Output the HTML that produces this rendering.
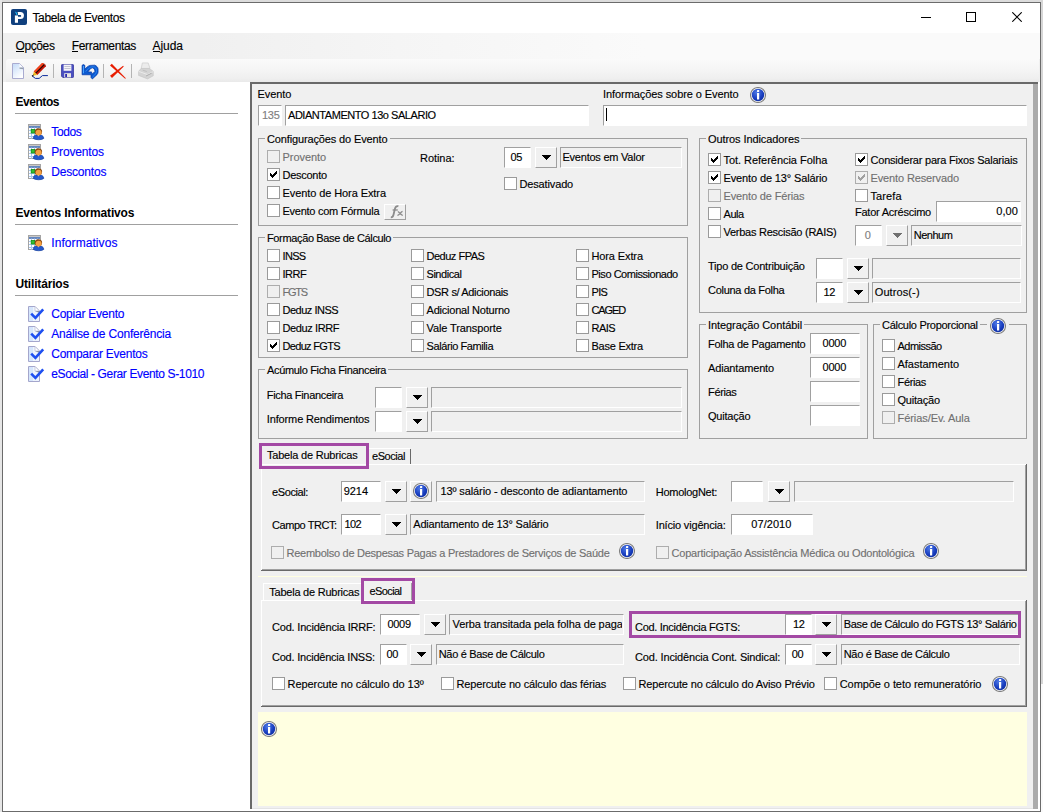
<!DOCTYPE html>
<html><head><meta charset="utf-8"><title>Tabela de Eventos</title>
<style>
html,body{margin:0;padding:0;}
body{width:1043px;height:812px;position:relative;overflow:hidden;background:#fff;font-family:"Liberation Sans",sans-serif;}
div,span.t,svg.a{position:absolute;}
span.t{white-space:nowrap;display:block;-webkit-text-stroke:0.14px currentColor;}
div{overflow:hidden;}
</style></head><body>
<div style="left:0px;top:0px;width:1043px;height:812px;background:#dcdcdc;"></div>
<div style="left:2px;top:2px;width:1039px;height:810px;background:#6b6b6b;"></div>
<div style="left:3px;top:3px;width:1037px;height:808px;background:#fff;"></div>
<div style="left:1041px;top:0px;width:2px;height:684px;background:#d6d6d6;"></div>
<div style="left:1041px;top:684px;width:2px;height:128px;background:#fafafa;"></div>
<div style="left:0px;top:0px;width:2px;height:812px;background:#e6e6e6;"></div>
<svg class="a" style="left:11px;top:9px" width="16" height="16" viewBox="0 0 16 16"><rect x="0" y="0" width="16" height="16" rx="2" fill="#10407e"/><path d="M6.4 2.9h3a3.55 3.55 0 0 1 0 7.1H7v3.800H3.900V6.200h3.100v1.600h2.300a0.900 0.900 0 0 0 0-1.800H6.400z" fill="#fff"/><path d="M3.900 6.200h3.100V5.000L6.400 2.900z" fill="#0e3068"/><path d="M3.800 2.400l2.000 1.000 1.000 3.000-1.600-1.100z" fill="#19b5f0"/></svg>
<span class="t " style="top:9.84px;font-size:12px;line-height:16px;letter-spacing:-0.394px;color:#000;left:32.5px;">Tabela de Eventos</span>
<div style="left:921px;top:17px;width:10px;height:1px;background:#000;"></div>
<div style="left:966px;top:12px;width:10px;height:10px;border:1px solid #000;box-sizing:border-box;"></div>
<svg class="a" style="left:1012px;top:12px" width="10" height="10" viewBox="0 0 10 10"><path d="M0.3 0.3L9.7 9.7M9.7 0.3L0.3 9.7" stroke="#000" stroke-width="1.1" fill="none"/></svg>
<div style="left:3px;top:33px;width:1037px;height:26px;background:linear-gradient(90deg,#f0f0f0 0%,#f0f0f0 19%,#f5f5f5 38%,#fafafa 62%,#fafafa 100%);"></div>
<span class="t " style="top:37.84px;font-size:12px;line-height:16px;letter-spacing:-0.391px;color:#000;left:15.5px;">Opções</span>
<div style="left:15.5px;top:51px;width:8px;height:1px;background:#000;"></div>
<span class="t " style="top:37.84px;font-size:12px;line-height:16px;letter-spacing:-0.342px;color:#000;left:71.75px;">Ferramentas</span>
<div style="left:71.75px;top:51px;width:6px;height:1px;background:#000;"></div>
<span class="t " style="top:37.84px;font-size:12px;line-height:16px;letter-spacing:-0.037px;color:#000;left:152.5px;">Ajuda</span>
<div style="left:152.5px;top:51px;width:7px;height:1px;background:#000;"></div>
<div style="left:3px;top:59px;width:1037px;height:23px;background:#f0f0f0;"></div>
<div style="left:6px;top:59px;width:1033px;height:23px;background:linear-gradient(180deg,#fafafa 0%,#f6f6f6 40%,#efefef 85%,#e9e9e9 100%);border-radius:3px 0 0 0;"></div>
<svg class="a" style="left:12px;top:63px" width="12" height="16" viewBox="0 0 12 16"><defs><linearGradient id="nd" x1="0" y1="0" x2="0.6" y2="1"><stop offset="0" stop-color="#c2daf8"/><stop offset="1" stop-color="#ffffff"/></linearGradient></defs><path d="M0.500 0.500h7l4 4v11h-11z" fill="url(#nd)" stroke="#a9abd0" stroke-width="1"/><path d="M7.500 0.800v3.700h3.700z" fill="#fafbfe"/><path d="M7.500 4.500h3.700v1.700l-3.700-0.500z" fill="#8690a0" opacity="0.85"/></svg>
<svg class="a" style="left:31px;top:62px" width="18" height="18" viewBox="0 0 18 18"><path d="M2.800 9.500L11.100 1.100L12.500 0.900L14.900 3.000L14.900 4.200L6.300 13.000z" fill="#c41608"/><path d="M2.800 9.500L11.100 1.100L12.500 0.900L13.300 1.600L4.300 10.900z" fill="#f4441a"/><path d="M4.500 11.300L13.500 2.300" stroke="#1a0a06" stroke-width="1.100"/><path d="M12.300 1.000l2.500 2.200" stroke="#e8e0e0" stroke-width="0.500"/><path d="M2.800 9.500L6.300 13.000L2.000 13.500z" fill="#f0bc1c"/><path d="M2.000 13.500l1.300-0.150-0.900-1.000z" fill="#3a2a10"/><path d="M1.300 13.300L2.000 14.600" stroke="#08102a" stroke-width="1.300"/><path d="M2.000 14.600L4.400 16.400L8.200 16.400L11.400 13.600L16.900 13.600" fill="none" stroke="#0a2a9c" stroke-width="1.000"/></svg>
<div style="left:53px;top:64px;width:1px;height:14px;background:#b4b4b4;"></div>
<svg class="a" style="left:61px;top:64px" width="13" height="14" viewBox="0 0 13 14"><path d="M0.5 1.2q0-0.7 0.7-0.7h10.6q0.7 0 0.7 0.7v11.6q0 0.7-0.7 0.7H1.8L0.5 12.2z" fill="#4a4fc0" stroke="#3a3aa0" stroke-width="0.8"/><rect x="2.6" y="0.6" width="7.8" height="6.2" fill="#f4f4f8"/><rect x="3.4" y="2.2" width="6.2" height="0.8" fill="#b8b8c8"/><rect x="3.4" y="4" width="6.2" height="0.8" fill="#b8b8c8"/><rect x="3.2" y="9.2" width="6.8" height="4.2" fill="#e8e6e0"/><rect x="4.2" y="10" width="1.8" height="3" fill="#2a2ab0"/></svg>
<svg class="a" style="left:81px;top:64px" width="18" height="16" viewBox="0 0 18 16"><path fill-rule="evenodd" d="M1.100 1.300L2.400 0.500L3.800 1.300L3.800 5.300C5.500 3.200 7.500 1.600 9.200 1.400L13.800 1.150C15.500 1.800 17.050 3.400 17.050 4.940L17.050 8.200C17.000 9.200 16.500 10.000 15.970 10.630L11.360 14.970L10.000 13.500L10.000 10.770L1.100 10.770zM6.800 7.900L10.550 7.900L10.900 10.200L14.050 7.380L13.260 4.940L11.630 3.860L9.740 4.400z" fill="#0c5ad0" stroke="#0036a6" stroke-width="0.700" stroke-linejoin="round"/><path d="M2.500 2.000L2.500 9.300" stroke="#46a4ff" stroke-width="1.000"/><path d="M4.600 7.600C6.500 5.000 8.500 3.000 11.800 2.700C14.500 2.600 15.600 4.800 15.600 6.600C15.600 9.000 13.800 11.000 11.400 13.200" fill="none" stroke="#2a84f0" stroke-width="0.900"/></svg>
<div style="left:103px;top:64px;width:1px;height:14px;background:#b4b4b4;"></div>
<svg class="a" style="left:110px;top:63px" width="17" height="17" viewBox="0 0 17 17"><path d="M1.820 0.680L15.850 15.150L15.150 15.850L-0.020 2.520z" fill="#e81c00"/><path d="M13.120 2.820L13.780 3.580L1.980 15.040L0.020 12.760z" fill="#e81c00"/></svg>
<div style="left:131px;top:64px;width:1px;height:14px;background:#b4b4b4;"></div>
<svg class="a" style="left:138px;top:62px" width="16" height="17.500" viewBox="0 0 17 18" preserveAspectRatio="none"><path d="M3.4 7L4.6 1h6.2l2 5.6z" fill="#ececec" stroke="#cfcfcf" stroke-width="0.8"/><path d="M0.6 9.6L3.4 6.6h8.4l4.4 3v4.6l-6 3.2-9.600-3.600z" fill="#d4d4d4" stroke="#c2c2c2" stroke-width="0.6"/><path d="M0.6 9.6l9.600 3.400 6-3.200" fill="none" stroke="#eeeeee" stroke-width="0.9"/><path d="M8.600 14.400l6-3" stroke="#aaaaaa" stroke-width="1"/><path d="M5 8.400l4.400 1.400" stroke="#b8b8b8" stroke-width="0.8"/></svg>
<span class="t " style="top:93.84px;font-size:12px;line-height:16px;letter-spacing:-0.453px;color:#000;font-weight:bold;-webkit-text-stroke:0;left:15.5px;">Eventos</span>
<div style="left:15px;top:113px;width:223px;height:1px;background:#a0a0a0;"></div>
<svg class="a" style="left:28px;top:124px" width="17" height="17" viewBox="0 0 17 17"><rect x="0.5" y="0.5" width="12" height="14" fill="#fff" stroke="#a4a4a4"/><rect x="1" y="1" width="11" height="1.300" fill="#c8c8c8"/><rect x="1" y="2.300" width="11" height="1.400" fill="#2c5aa8"/><path d="M1 6.500h11M1 9.500h11M1 12.500h11M3.500 3.600v11M6.500 3.600v11M9.500 3.600v11" stroke="#a8c8f0" stroke-width="1"/><rect x="3.200" y="5.400" width="3.600" height="3.600" fill="#30c030" stroke="#109010" stroke-width="0.8"/><path d="M5.200 14.400c0-2.600 1.800-3.600 5-3.600s5.600 1 5.600 3.600c-1.600 1.800-8.600 1.800-10.600 0z" fill="#2458c8" stroke="#123a98" stroke-width="0.6"/><path d="M9.400 10.800l1 1.800 1-1.800z" fill="#e8f0ff"/><ellipse cx="10.400" cy="7.800" rx="3.700" ry="3.500" fill="#8a4a10"/><ellipse cx="10.600" cy="8.600" rx="3" ry="2.900" fill="#f5a040"/></svg>
<span class="t " style="top:123.84px;font-size:12px;line-height:16px;letter-spacing:-0.353px;color:#0000ff;left:51.25px;">Todos</span>
<svg class="a" style="left:28px;top:144px" width="17" height="17" viewBox="0 0 17 17"><rect x="0.5" y="0.5" width="12" height="14" fill="#fff" stroke="#a4a4a4"/><rect x="1" y="1" width="11" height="1.300" fill="#c8c8c8"/><rect x="1" y="2.300" width="11" height="1.400" fill="#2c5aa8"/><path d="M1 6.500h11M1 9.500h11M1 12.500h11M3.500 3.600v11M6.500 3.600v11M9.500 3.600v11" stroke="#a8c8f0" stroke-width="1"/><rect x="3.200" y="5.400" width="3.600" height="3.600" fill="#30c030" stroke="#109010" stroke-width="0.8"/><path d="M5.200 14.400c0-2.600 1.800-3.600 5-3.600s5.600 1 5.600 3.600c-1.600 1.800-8.600 1.800-10.600 0z" fill="#2458c8" stroke="#123a98" stroke-width="0.6"/><path d="M9.400 10.800l1 1.800 1-1.800z" fill="#e8f0ff"/><ellipse cx="10.400" cy="7.800" rx="3.700" ry="3.500" fill="#8a4a10"/><ellipse cx="10.600" cy="8.600" rx="3" ry="2.900" fill="#f5a040"/></svg>
<span class="t " style="top:143.84px;font-size:12px;line-height:16px;letter-spacing:-0.168px;color:#0000ff;left:51.25px;">Proventos</span>
<svg class="a" style="left:28px;top:164px" width="17" height="17" viewBox="0 0 17 17"><rect x="0.5" y="0.5" width="12" height="14" fill="#fff" stroke="#a4a4a4"/><rect x="1" y="1" width="11" height="1.300" fill="#c8c8c8"/><rect x="1" y="2.300" width="11" height="1.400" fill="#2c5aa8"/><path d="M1 6.500h11M1 9.500h11M1 12.500h11M3.500 3.600v11M6.500 3.600v11M9.500 3.600v11" stroke="#a8c8f0" stroke-width="1"/><rect x="3.200" y="5.400" width="3.600" height="3.600" fill="#30c030" stroke="#109010" stroke-width="0.8"/><path d="M5.200 14.400c0-2.600 1.800-3.600 5-3.600s5.600 1 5.600 3.600c-1.600 1.800-8.600 1.800-10.600 0z" fill="#2458c8" stroke="#123a98" stroke-width="0.6"/><path d="M9.400 10.800l1 1.800 1-1.800z" fill="#e8f0ff"/><ellipse cx="10.400" cy="7.800" rx="3.700" ry="3.500" fill="#8a4a10"/><ellipse cx="10.600" cy="8.600" rx="3" ry="2.900" fill="#f5a040"/></svg>
<span class="t " style="top:163.84px;font-size:12px;line-height:16px;letter-spacing:-0.188px;color:#0000ff;left:51.25px;">Descontos</span>
<span class="t " style="top:204.84px;font-size:12px;line-height:16px;letter-spacing:-0.163px;color:#000;font-weight:bold;-webkit-text-stroke:0;left:15.5px;">Eventos Informativos</span>
<div style="left:15px;top:224px;width:223px;height:1px;background:#a0a0a0;"></div>
<svg class="a" style="left:28px;top:235px" width="17" height="17" viewBox="0 0 17 17"><rect x="0.5" y="0.5" width="12" height="14" fill="#fff" stroke="#a4a4a4"/><rect x="1" y="1" width="11" height="1.300" fill="#c8c8c8"/><rect x="1" y="2.300" width="11" height="1.400" fill="#2c5aa8"/><path d="M1 6.500h11M1 9.500h11M1 12.500h11M3.500 3.600v11M6.500 3.600v11M9.500 3.600v11" stroke="#a8c8f0" stroke-width="1"/><rect x="3.200" y="5.400" width="3.600" height="3.600" fill="#30c030" stroke="#109010" stroke-width="0.8"/><path d="M5.200 14.400c0-2.600 1.800-3.600 5-3.600s5.600 1 5.600 3.600c-1.600 1.800-8.600 1.800-10.600 0z" fill="#2458c8" stroke="#123a98" stroke-width="0.6"/><path d="M9.400 10.800l1 1.800 1-1.800z" fill="#e8f0ff"/><ellipse cx="10.400" cy="7.800" rx="3.700" ry="3.500" fill="#8a4a10"/><ellipse cx="10.600" cy="8.600" rx="3" ry="2.900" fill="#f5a040"/></svg>
<span class="t " style="top:234.84px;font-size:12px;line-height:16px;letter-spacing:0.076px;color:#0000ff;left:51.25px;">Informativos</span>
<span class="t " style="top:275.84px;font-size:12px;line-height:16px;letter-spacing:-0.166px;color:#000;font-weight:bold;-webkit-text-stroke:0;left:15.5px;">Utilitários</span>
<div style="left:15px;top:295px;width:223px;height:1px;background:#a0a0a0;"></div>
<svg class="a" style="left:28px;top:306px" width="17" height="17" viewBox="0 0 17 17"><path d="M0.500 0.500h6.500l4.500 4.500v10.500h-11z" fill="#eef4fd" stroke="#a4a6cc"/><path d="M1 1h4v14h-4z" fill="#cfe2fb" opacity="0.8"/><path d="M7.000 0.500v4.500h4.500z" fill="#fff" stroke="#b8bad4" stroke-width="0.7"/><path d="M7.100 5h4.200v2z" fill="#7c8694" opacity="0.85"/><path d="M3.200 7.600l4.200 4.200 7.800-8.400" fill="none" stroke="#1e4ff0" stroke-width="2.600"/></svg>
<span class="t " style="top:305.84px;font-size:12px;line-height:16px;letter-spacing:-0.233px;color:#0000ff;left:51.25px;">Copiar Evento</span>
<svg class="a" style="left:28px;top:326px" width="17" height="17" viewBox="0 0 17 17"><path d="M0.500 0.500h6.500l4.500 4.500v10.500h-11z" fill="#eef4fd" stroke="#a4a6cc"/><path d="M1 1h4v14h-4z" fill="#cfe2fb" opacity="0.8"/><path d="M7.000 0.500v4.500h4.500z" fill="#fff" stroke="#b8bad4" stroke-width="0.7"/><path d="M7.100 5h4.200v2z" fill="#7c8694" opacity="0.85"/><path d="M3.200 7.600l4.200 4.200 7.800-8.400" fill="none" stroke="#1e4ff0" stroke-width="2.600"/></svg>
<span class="t " style="top:325.84px;font-size:12px;line-height:16px;letter-spacing:-0.196px;color:#0000ff;left:51.25px;">Análise de Conferência</span>
<svg class="a" style="left:28px;top:346px" width="17" height="17" viewBox="0 0 17 17"><path d="M0.500 0.500h6.500l4.500 4.500v10.500h-11z" fill="#eef4fd" stroke="#a4a6cc"/><path d="M1 1h4v14h-4z" fill="#cfe2fb" opacity="0.8"/><path d="M7.000 0.500v4.500h4.500z" fill="#fff" stroke="#b8bad4" stroke-width="0.7"/><path d="M7.100 5h4.200v2z" fill="#7c8694" opacity="0.85"/><path d="M3.200 7.600l4.200 4.200 7.800-8.400" fill="none" stroke="#1e4ff0" stroke-width="2.600"/></svg>
<span class="t " style="top:345.84px;font-size:12px;line-height:16px;letter-spacing:-0.236px;color:#0000ff;left:51.25px;">Comparar Eventos</span>
<svg class="a" style="left:28px;top:366px" width="17" height="17" viewBox="0 0 17 17"><path d="M0.500 0.500h6.500l4.500 4.500v10.500h-11z" fill="#eef4fd" stroke="#a4a6cc"/><path d="M1 1h4v14h-4z" fill="#cfe2fb" opacity="0.8"/><path d="M7.000 0.500v4.500h4.500z" fill="#fff" stroke="#b8bad4" stroke-width="0.7"/><path d="M7.100 5h4.200v2z" fill="#7c8694" opacity="0.85"/><path d="M3.200 7.600l4.200 4.200 7.800-8.400" fill="none" stroke="#1e4ff0" stroke-width="2.600"/></svg>
<span class="t " style="top:365.84px;font-size:12px;line-height:16px;letter-spacing:-0.366px;color:#0000ff;left:51.25px;">eSocial - Gerar Evento S-1010</span>
<div style="left:250px;top:82px;width:789px;height:727px;background:#696969;"></div>
<div style="left:252px;top:84px;width:788px;height:727px;background:#f0f0f0;"></div>
<div style="left:1033px;top:84px;width:5px;height:725px;background:#ababab;"></div>
<div style="left:1038px;top:82px;width:2px;height:729px;background:#fff;"></div>
<div style="left:1039px;top:82px;width:1px;height:2px;background:#fff;"></div>
<div style="left:250px;top:809px;width:790px;height:2px;background:#fff;"></div>
<div style="left:252px;top:808px;width:781px;height:1px;background:#e4e4e4;"></div>
<span class="t " style="top:86.69px;font-size:11px;line-height:15px;letter-spacing:-0.097px;color:#000;left:257.5px;">Evento</span>
<div style="left:258px;top:105px;width:24px;height:21px;background:#fff;border:1px solid;border-color:#a0a0a0 #fff #fff #a0a0a0;box-sizing:border-box;"></div>
<span class="t " style="top:107.69px;font-size:11px;line-height:15px;letter-spacing:-0.292px;color:#808080;left:262px;">135</span>
<div style="left:285px;top:105px;width:304px;height:21px;background:#fff;border:1px solid;border-color:#a0a0a0 #fff #fff #a0a0a0;box-sizing:border-box;"></div>
<span class="t " style="top:107.69px;font-size:11px;line-height:15px;letter-spacing:-0.455px;color:#000;left:288px;">ADIANTAMENTO 13o SALARIO</span>
<span class="t " style="top:86.69px;font-size:11px;line-height:15px;letter-spacing:-0.075px;color:#000;left:603px;">Informações sobre o Evento</span>
<svg class="a" style="left:750px;top:87px" width="16" height="16" viewBox="0 0 16 16"><defs><radialGradient id="ig1" cx="0.4" cy="0.3" r="0.8"><stop offset="0" stop-color="#4f7be6"/><stop offset="0.6" stop-color="#1a3fc0"/><stop offset="1" stop-color="#0a2a9a"/></radialGradient></defs><circle cx="8" cy="8" r="7.5" fill="#fafafa" stroke="#808080" stroke-width="1.1"/><circle cx="8" cy="8" r="6.2" fill="url(#ig1)"/><rect x="7" y="3" width="2.2" height="2" rx="0.6" fill="#fff"/><rect x="7" y="6" width="2.2" height="6.5" fill="#fff"/></svg>
<div style="left:603px;top:105px;width:424px;height:21px;background:#fff;border:1px solid;border-color:#a0a0a0 #fff #fff #a0a0a0;box-sizing:border-box;"></div>
<div style="left:606px;top:108px;width:1px;height:13px;background:#000;"></div>
<div style="left:258px;top:138px;width:430px;height:88px;border:1px solid #a0a0a0;box-sizing:border-box;"></div>
<div style="left:265px;top:136px;width:124.5px;height:5px;background:#f0f0f0;"></div>
<span class="t " style="top:131.69px;font-size:11px;line-height:15px;letter-spacing:-0.136px;color:#000;left:267px;">Configurações do Evento</span>
<div style="left:267px;top:150px;width:13px;height:13px;background:#f0f0f0;border:1px solid #adadad;box-sizing:border-box;"></div>
<span class="t " style="top:149.69px;font-size:11px;line-height:15px;letter-spacing:-0.058px;color:#707070;left:282.5px;">Provento</span>
<div style="left:267px;top:168px;width:13px;height:13px;background:#fff;border:1px solid #9a9a9a;box-sizing:border-box;"><svg class="a" style="left:1px;top:1px" width="9" height="9" viewBox="0 0 9 9" shape-rendering="crispEdges"><path d="M1 3h1v3h-1zM2 4h1v3h-1zM3 5h1v3h-1zM4 4h1v3h-1zM5 3h1v3h-1zM6 2h1v3h-1zM7 1h1v3h-1z" fill="#000"/></svg></div>
<span class="t " style="top:167.69px;font-size:11px;line-height:15px;letter-spacing:-0.263px;color:#000;left:282.5px;">Desconto</span>
<div style="left:267px;top:186px;width:13px;height:13px;background:#fff;border:1px solid #9a9a9a;box-sizing:border-box;"></div>
<span class="t " style="top:185.69px;font-size:11px;line-height:15px;letter-spacing:-0.087px;color:#000;left:282.5px;">Evento de Hora Extra</span>
<div style="left:267px;top:204px;width:13px;height:13px;background:#fff;border:1px solid #9a9a9a;box-sizing:border-box;"></div>
<span class="t " style="top:203.69px;font-size:11px;line-height:15px;letter-spacing:-0.263px;color:#000;left:282.5px;">Evento com Fórmula</span>
<div style="left:384px;top:204px;width:22px;height:16px;background:#f0f0f0;border:1px solid;border-color:#fff #a0a0a0 #a0a0a0 #fff;box-sizing:border-box;"></div>
<svg class="a" style="left:389px;top:205px" width="17" height="14" viewBox="0 0 17 14"><path d="M1.800 12.300c1.600 0.100 2.300-0.900 2.700-2.600l1.500-6.200c0.500-1.900 1.500-2.700 3.400-2.300" fill="none" stroke="#8c8c8c" stroke-width="1.800"/><path d="M3.600 5.000h5.200" stroke="#8c8c8c" stroke-width="1.300"/><path d="M8.800 6.600c1.400 0 3.400 3.800 5.000 3.800M13.600 6.400c-1.600 0.200-3.400 4.000-5.200 4.000" stroke="#8c8c8c" stroke-width="1.300" fill="none"/></svg>
<span class="t " style="top:150.69px;font-size:11px;line-height:15px;letter-spacing:-0.054px;color:#000;left:420px;">Rotina:</span>
<div style="left:504px;top:147px;width:27px;height:21px;background:#fff;border:1px solid;border-color:#a0a0a0 #fff #fff #a0a0a0;box-sizing:border-box;"></div>
<span class="t " style="top:149.69px;font-size:11px;line-height:15px;letter-spacing:-0.275px;color:#000;left:510.5px;">05</span>
<div style="left:535px;top:147px;width:22px;height:21px;background:#f0f0f0;border:1px solid;border-color:#fff #a0a0a0 #a0a0a0 #fff;box-sizing:border-box;"></div>
<svg class="a" style="left:541.5px;top:155px" width="9" height="5" viewBox="0 0 9 5" shape-rendering="crispEdges"><path d="M0 0h9v1h-9zM1 1h7v1h-7zM2 2h5v1h-5zM3 3h3v1h-3zM4 4h1v1h-1z" fill="#000"/></svg>
<div style="left:560px;top:147px;width:122px;height:21px;background:#f0f0f0;border:1px solid;border-color:#a0a0a0 #fff #fff #a0a0a0;box-sizing:border-box;"></div>
<span class="t " style="top:149.69px;font-size:11px;line-height:15px;letter-spacing:-0.235px;color:#000;left:562.5px;">Eventos em Valor</span>
<div style="left:504px;top:177px;width:13px;height:13px;background:#fff;border:1px solid #9a9a9a;box-sizing:border-box;"></div>
<span class="t " style="top:176.69px;font-size:11px;line-height:15px;letter-spacing:-0.146px;color:#000;left:519.5px;">Desativado</span>
<div style="left:258px;top:237px;width:430px;height:121px;border:1px solid #a0a0a0;box-sizing:border-box;"></div>
<div style="left:265px;top:235px;width:128.2px;height:5px;background:#f0f0f0;"></div>
<span class="t " style="top:230.69px;font-size:11px;line-height:15px;letter-spacing:-0.356px;color:#000;left:267px;">Formação Base de Cálculo</span>
<div style="left:267px;top:249px;width:13px;height:13px;background:#fff;border:1px solid #9a9a9a;box-sizing:border-box;"></div>
<span class="t " style="top:248.69px;font-size:11px;line-height:15px;letter-spacing:-0.672px;color:#000;left:282.5px;">INSS</span>
<div style="left:411px;top:249px;width:13px;height:13px;background:#fff;border:1px solid #9a9a9a;box-sizing:border-box;"></div>
<span class="t " style="top:248.69px;font-size:11px;line-height:15px;letter-spacing:-0.491px;color:#000;left:426.5px;">Deduz FPAS</span>
<div style="left:576px;top:249px;width:13px;height:13px;background:#fff;border:1px solid #9a9a9a;box-sizing:border-box;"></div>
<span class="t " style="top:248.69px;font-size:11px;line-height:15px;letter-spacing:-0.119px;color:#000;left:591.5px;">Hora Extra</span>
<div style="left:267px;top:267px;width:13px;height:13px;background:#fff;border:1px solid #9a9a9a;box-sizing:border-box;"></div>
<span class="t " style="top:266.69px;font-size:11px;line-height:15px;letter-spacing:-0.489px;color:#000;left:282.5px;">IRRF</span>
<div style="left:411px;top:267px;width:13px;height:13px;background:#fff;border:1px solid #9a9a9a;box-sizing:border-box;"></div>
<span class="t " style="top:266.69px;font-size:11px;line-height:15px;letter-spacing:-0.454px;color:#000;left:426.5px;">Sindical</span>
<div style="left:576px;top:267px;width:13px;height:13px;background:#fff;border:1px solid #9a9a9a;box-sizing:border-box;"></div>
<span class="t " style="top:266.69px;font-size:11px;line-height:15px;letter-spacing:-0.464px;color:#000;left:591.5px;">Piso Comissionado</span>
<div style="left:267px;top:285px;width:13px;height:13px;background:#f0f0f0;border:1px solid #adadad;box-sizing:border-box;"></div>
<span class="t " style="top:284.69px;font-size:11px;line-height:15px;letter-spacing:-1.236px;color:#707070;left:282.5px;">FGTS</span>
<div style="left:411px;top:285px;width:13px;height:13px;background:#fff;border:1px solid #9a9a9a;box-sizing:border-box;"></div>
<span class="t " style="top:284.69px;font-size:11px;line-height:15px;letter-spacing:-0.350px;color:#000;left:426.5px;">DSR s/ Adicionais</span>
<div style="left:576px;top:285px;width:13px;height:13px;background:#fff;border:1px solid #9a9a9a;box-sizing:border-box;"></div>
<span class="t " style="top:284.69px;font-size:11px;line-height:15px;letter-spacing:-0.683px;color:#000;left:591.5px;">PIS</span>
<div style="left:267px;top:303px;width:13px;height:13px;background:#fff;border:1px solid #9a9a9a;box-sizing:border-box;"></div>
<span class="t " style="top:302.69px;font-size:11px;line-height:15px;letter-spacing:-0.496px;color:#000;left:282.5px;">Deduz INSS</span>
<div style="left:411px;top:303px;width:13px;height:13px;background:#fff;border:1px solid #9a9a9a;box-sizing:border-box;"></div>
<span class="t " style="top:302.69px;font-size:11px;line-height:15px;letter-spacing:-0.210px;color:#000;left:426.5px;">Adicional Noturno</span>
<div style="left:576px;top:303px;width:13px;height:13px;background:#fff;border:1px solid #9a9a9a;box-sizing:border-box;"></div>
<span class="t " style="top:302.69px;font-size:11px;line-height:15px;letter-spacing:-1.085px;color:#000;left:591.5px;">CAGED</span>
<div style="left:267px;top:321px;width:13px;height:13px;background:#fff;border:1px solid #9a9a9a;box-sizing:border-box;"></div>
<span class="t " style="top:320.69px;font-size:11px;line-height:15px;letter-spacing:-0.393px;color:#000;left:282.5px;">Deduz IRRF</span>
<div style="left:411px;top:321px;width:13px;height:13px;background:#fff;border:1px solid #9a9a9a;box-sizing:border-box;"></div>
<span class="t " style="top:320.69px;font-size:11px;line-height:15px;letter-spacing:-0.106px;color:#000;left:426.5px;">Vale Transporte</span>
<div style="left:576px;top:321px;width:13px;height:13px;background:#fff;border:1px solid #9a9a9a;box-sizing:border-box;"></div>
<span class="t " style="top:320.69px;font-size:11px;line-height:15px;letter-spacing:-0.497px;color:#000;left:591.5px;">RAIS</span>
<div style="left:267px;top:339px;width:13px;height:13px;background:#fff;border:1px solid #9a9a9a;box-sizing:border-box;"><svg class="a" style="left:1px;top:1px" width="9" height="9" viewBox="0 0 9 9" shape-rendering="crispEdges"><path d="M1 3h1v3h-1zM2 4h1v3h-1zM3 5h1v3h-1zM4 4h1v3h-1zM5 3h1v3h-1zM6 2h1v3h-1zM7 1h1v3h-1z" fill="#000"/></svg></div>
<span class="t " style="top:338.69px;font-size:11px;line-height:15px;letter-spacing:-0.682px;color:#000;left:282.5px;">Deduz FGTS</span>
<div style="left:411px;top:339px;width:13px;height:13px;background:#fff;border:1px solid #9a9a9a;box-sizing:border-box;"></div>
<span class="t " style="top:338.69px;font-size:11px;line-height:15px;letter-spacing:-0.410px;color:#000;left:426.5px;">Salário Familia</span>
<div style="left:576px;top:339px;width:13px;height:13px;background:#fff;border:1px solid #9a9a9a;box-sizing:border-box;"></div>
<span class="t " style="top:338.69px;font-size:11px;line-height:15px;letter-spacing:-0.244px;color:#000;left:591.5px;">Base Extra</span>
<div style="left:258px;top:369px;width:430px;height:70px;border:1px solid #a0a0a0;box-sizing:border-box;"></div>
<div style="left:265px;top:367px;width:123.2px;height:5px;background:#f0f0f0;"></div>
<span class="t " style="top:362.69px;font-size:11px;line-height:15px;letter-spacing:-0.334px;color:#000;left:267px;">Acúmulo Ficha Financeira</span>
<span class="t " style="top:387.69px;font-size:11px;line-height:15px;letter-spacing:-0.315px;color:#000;left:266.75px;">Ficha Financeira</span>
<span class="t " style="top:411.69px;font-size:11px;line-height:15px;letter-spacing:-0.130px;color:#000;left:266.75px;">Informe Rendimentos</span>
<div style="left:375px;top:387px;width:27px;height:21px;background:#fff;border:1px solid;border-color:#a0a0a0 #fff #fff #a0a0a0;box-sizing:border-box;"></div>
<div style="left:406px;top:387px;width:22px;height:21px;background:#f0f0f0;border:1px solid;border-color:#fff #a0a0a0 #a0a0a0 #fff;box-sizing:border-box;"></div>
<svg class="a" style="left:412.5px;top:395px" width="9" height="5" viewBox="0 0 9 5" shape-rendering="crispEdges"><path d="M0 0h9v1h-9zM1 1h7v1h-7zM2 2h5v1h-5zM3 3h3v1h-3zM4 4h1v1h-1z" fill="#000"/></svg>
<div style="left:431px;top:387px;width:251px;height:21px;background:#f0f0f0;border:1px solid;border-color:#a0a0a0 #fff #fff #a0a0a0;box-sizing:border-box;"></div>
<div style="left:375px;top:411px;width:27px;height:21px;background:#fff;border:1px solid;border-color:#a0a0a0 #fff #fff #a0a0a0;box-sizing:border-box;"></div>
<div style="left:406px;top:411px;width:22px;height:21px;background:#f0f0f0;border:1px solid;border-color:#fff #a0a0a0 #a0a0a0 #fff;box-sizing:border-box;"></div>
<svg class="a" style="left:412.5px;top:419px" width="9" height="5" viewBox="0 0 9 5" shape-rendering="crispEdges"><path d="M0 0h9v1h-9zM1 1h7v1h-7zM2 2h5v1h-5zM3 3h3v1h-3zM4 4h1v1h-1z" fill="#000"/></svg>
<div style="left:431px;top:411px;width:251px;height:21px;background:#f0f0f0;border:1px solid;border-color:#a0a0a0 #fff #fff #a0a0a0;box-sizing:border-box;"></div>
<div style="left:699px;top:138px;width:328px;height:175px;border:1px solid #a0a0a0;box-sizing:border-box;"></div>
<div style="left:706px;top:136px;width:95.4px;height:5px;background:#f0f0f0;"></div>
<span class="t " style="top:131.69px;font-size:11px;line-height:15px;letter-spacing:-0.089px;color:#000;left:708px;">Outros Indicadores</span>
<div style="left:708px;top:153px;width:13px;height:13px;background:#fff;border:1px solid #9a9a9a;box-sizing:border-box;"><svg class="a" style="left:1px;top:1px" width="9" height="9" viewBox="0 0 9 9" shape-rendering="crispEdges"><path d="M1 3h1v3h-1zM2 4h1v3h-1zM3 5h1v3h-1zM4 4h1v3h-1zM5 3h1v3h-1zM6 2h1v3h-1zM7 1h1v3h-1z" fill="#000"/></svg></div>
<span class="t " style="top:152.69px;font-size:11px;line-height:15px;letter-spacing:-0.035px;color:#000;left:723.5px;">Tot. Referência Folha</span>
<div style="left:708px;top:171px;width:13px;height:13px;background:#fff;border:1px solid #9a9a9a;box-sizing:border-box;"><svg class="a" style="left:1px;top:1px" width="9" height="9" viewBox="0 0 9 9" shape-rendering="crispEdges"><path d="M1 3h1v3h-1zM2 4h1v3h-1zM3 5h1v3h-1zM4 4h1v3h-1zM5 3h1v3h-1zM6 2h1v3h-1zM7 1h1v3h-1z" fill="#000"/></svg></div>
<span class="t " style="top:170.69px;font-size:11px;line-height:15px;letter-spacing:-0.130px;color:#000;left:723.5px;">Evento de 13° Salário</span>
<div style="left:708px;top:189px;width:13px;height:13px;background:#f0f0f0;border:1px solid #adadad;box-sizing:border-box;"></div>
<span class="t " style="top:188.69px;font-size:11px;line-height:15px;letter-spacing:-0.145px;color:#707070;left:723.5px;">Evento de Férias</span>
<div style="left:708px;top:207px;width:13px;height:13px;background:#fff;border:1px solid #9a9a9a;box-sizing:border-box;"></div>
<span class="t " style="top:206.69px;font-size:11px;line-height:15px;letter-spacing:-0.433px;color:#000;left:723.5px;">Aula</span>
<div style="left:708px;top:225px;width:13px;height:13px;background:#fff;border:1px solid #9a9a9a;box-sizing:border-box;"></div>
<span class="t " style="top:224.69px;font-size:11px;line-height:15px;letter-spacing:-0.256px;color:#000;left:723.5px;">Verbas Rescisão (RAIS)</span>
<div style="left:855px;top:153px;width:13px;height:13px;background:#fff;border:1px solid #9a9a9a;box-sizing:border-box;"><svg class="a" style="left:1px;top:1px" width="9" height="9" viewBox="0 0 9 9" shape-rendering="crispEdges"><path d="M1 3h1v3h-1zM2 4h1v3h-1zM3 5h1v3h-1zM4 4h1v3h-1zM5 3h1v3h-1zM6 2h1v3h-1zM7 1h1v3h-1z" fill="#000"/></svg></div>
<span class="t " style="top:152.69px;font-size:11px;line-height:15px;letter-spacing:-0.210px;color:#000;left:870.5px;">Considerar para Fixos Salariais</span>
<div style="left:855px;top:171px;width:13px;height:13px;background:#f0f0f0;border:1px solid #adadad;box-sizing:border-box;"><svg class="a" style="left:1px;top:1px" width="9" height="9" viewBox="0 0 9 9" shape-rendering="crispEdges"><path d="M1 3h1v3h-1zM2 4h1v3h-1zM3 5h1v3h-1zM4 4h1v3h-1zM5 3h1v3h-1zM6 2h1v3h-1zM7 1h1v3h-1z" fill="#a0a0a0"/></svg></div>
<span class="t " style="top:170.69px;font-size:11px;line-height:15px;letter-spacing:-0.129px;color:#707070;left:870.5px;">Evento Reservado</span>
<div style="left:855px;top:189px;width:13px;height:13px;background:#fff;border:1px solid #9a9a9a;box-sizing:border-box;"></div>
<span class="t " style="top:188.69px;font-size:11px;line-height:15px;letter-spacing:0.101px;color:#000;left:870.5px;">Tarefa</span>
<span class="t " style="top:204.69px;font-size:11px;line-height:15px;letter-spacing:-0.232px;color:#000;left:855px;">Fator Acréscimo</span>
<div style="left:936px;top:201px;width:85px;height:21px;background:#fff;border:1px solid;border-color:#a0a0a0 #fff #fff #a0a0a0;box-sizing:border-box;"></div>
<span class="t " style="top:203.69px;font-size:11px;line-height:15px;letter-spacing:0.066px;color:#000;left:996.23px;">0,00</span>
<div style="left:855px;top:225px;width:27px;height:21px;background:#fff;border:1px solid;border-color:#a0a0a0 #fff #fff #a0a0a0;box-sizing:border-box;"></div>
<span class="t " style="top:227.69px;font-size:11px;line-height:15px;letter-spacing:-0.325px;color:#808080;left:864.75px;">0</span>
<div style="left:886px;top:225px;width:22px;height:21px;background:#f0f0f0;border:1px solid;border-color:#fff #a0a0a0 #a0a0a0 #fff;box-sizing:border-box;"></div>
<svg class="a" style="left:892.5px;top:233px" width="9" height="5" viewBox="0 0 9 5" shape-rendering="crispEdges"><path d="M0 0h9v1h-9zM1 1h7v1h-7zM2 2h5v1h-5zM3 3h3v1h-3zM4 4h1v1h-1z" fill="#707070"/></svg>
<div style="left:911px;top:225px;width:111px;height:21px;background:#f0f0f0;border:1px solid;border-color:#a0a0a0 #fff #fff #a0a0a0;box-sizing:border-box;"></div>
<span class="t " style="top:227.69px;font-size:11px;line-height:15px;letter-spacing:-0.482px;color:#000;left:913.75px;">Nenhum</span>
<span class="t " style="top:258.69px;font-size:11px;line-height:15px;letter-spacing:-0.218px;color:#000;left:708px;">Tipo de Contribuição</span>
<span class="t " style="top:282.69px;font-size:11px;line-height:15px;letter-spacing:-0.285px;color:#000;left:708px;">Coluna da Folha</span>
<div style="left:816px;top:258px;width:27px;height:21px;background:#fff;border:1px solid;border-color:#a0a0a0 #fff #fff #a0a0a0;box-sizing:border-box;"></div>
<div style="left:847px;top:258px;width:22px;height:21px;background:#f0f0f0;border:1px solid;border-color:#fff #a0a0a0 #a0a0a0 #fff;box-sizing:border-box;"></div>
<svg class="a" style="left:853.5px;top:266px" width="9" height="5" viewBox="0 0 9 5" shape-rendering="crispEdges"><path d="M0 0h9v1h-9zM1 1h7v1h-7zM2 2h5v1h-5zM3 3h3v1h-3zM4 4h1v1h-1z" fill="#000"/></svg>
<div style="left:872px;top:258px;width:149px;height:21px;background:#f0f0f0;border:1px solid;border-color:#a0a0a0 #fff #fff #a0a0a0;box-sizing:border-box;"></div>
<div style="left:816px;top:282px;width:27px;height:21px;background:#fff;border:1px solid;border-color:#a0a0a0 #fff #fff #a0a0a0;box-sizing:border-box;"></div>
<div style="left:847px;top:282px;width:22px;height:21px;background:#f0f0f0;border:1px solid;border-color:#fff #a0a0a0 #a0a0a0 #fff;box-sizing:border-box;"></div>
<svg class="a" style="left:853.5px;top:290px" width="9" height="5" viewBox="0 0 9 5" shape-rendering="crispEdges"><path d="M0 0h9v1h-9zM1 1h7v1h-7zM2 2h5v1h-5zM3 3h3v1h-3zM4 4h1v1h-1z" fill="#000"/></svg>
<div style="left:872px;top:282px;width:149px;height:21px;background:#f0f0f0;border:1px solid;border-color:#a0a0a0 #fff #fff #a0a0a0;box-sizing:border-box;"></div>
<span class="t " style="top:284.69px;font-size:11px;line-height:15px;letter-spacing:-0.275px;color:#000;left:823.5px;">12</span>
<span class="t " style="top:284.69px;font-size:11px;line-height:15px;letter-spacing:0.100px;color:#000;left:874.75px;">Outros(-)</span>
<div style="left:699px;top:324px;width:169px;height:115px;border:1px solid #a0a0a0;box-sizing:border-box;"></div>
<div style="left:706px;top:322px;width:98.1px;height:5px;background:#f0f0f0;"></div>
<span class="t " style="top:317.69px;font-size:11px;line-height:15px;letter-spacing:-0.072px;color:#000;left:708px;">Integração Contábil</span>
<span class="t " style="top:336.69px;font-size:11px;line-height:15px;letter-spacing:-0.262px;color:#000;left:708px;">Folha de Pagamento</span>
<div style="left:810px;top:333px;width:50px;height:21px;background:#fff;border:1px solid;border-color:#a0a0a0 #fff #fff #a0a0a0;box-sizing:border-box;"></div>
<span class="t " style="top:335.69px;font-size:11px;line-height:15px;letter-spacing:-0.188px;color:#000;left:822.5px;">0000</span>
<span class="t " style="top:360.69px;font-size:11px;line-height:15px;letter-spacing:-0.161px;color:#000;left:708px;">Adiantamento</span>
<div style="left:810px;top:357px;width:50px;height:21px;background:#fff;border:1px solid;border-color:#a0a0a0 #fff #fff #a0a0a0;box-sizing:border-box;"></div>
<span class="t " style="top:359.69px;font-size:11px;line-height:15px;letter-spacing:-0.188px;color:#000;left:822.5px;">0000</span>
<span class="t " style="top:384.69px;font-size:11px;line-height:15px;letter-spacing:-0.344px;color:#000;left:708px;">Férias</span>
<div style="left:810px;top:381px;width:50px;height:21px;background:#fff;border:1px solid;border-color:#a0a0a0 #fff #fff #a0a0a0;box-sizing:border-box;"></div>
<span class="t " style="top:408.69px;font-size:11px;line-height:15px;letter-spacing:-0.208px;color:#000;left:708px;">Quitação</span>
<div style="left:810px;top:405px;width:50px;height:21px;background:#fff;border:1px solid;border-color:#a0a0a0 #fff #fff #a0a0a0;box-sizing:border-box;"></div>
<div style="left:873px;top:324px;width:154px;height:115px;border:1px solid #a0a0a0;box-sizing:border-box;"></div>
<div style="left:880px;top:322px;width:99.75px;height:5px;background:#f0f0f0;"></div>
<span class="t " style="top:317.69px;font-size:11px;line-height:15px;letter-spacing:-0.289px;color:#000;left:882px;">Cálculo Proporcional</span>
<div style="left:987px;top:322px;width:22px;height:5px;background:#f0f0f0;"></div>
<svg class="a" style="left:990px;top:318px" width="16" height="16" viewBox="0 0 16 16"><defs><radialGradient id="ig2" cx="0.4" cy="0.3" r="0.8"><stop offset="0" stop-color="#4f7be6"/><stop offset="0.6" stop-color="#1a3fc0"/><stop offset="1" stop-color="#0a2a9a"/></radialGradient></defs><circle cx="8" cy="8" r="7.5" fill="#fafafa" stroke="#808080" stroke-width="1.1"/><circle cx="8" cy="8" r="6.2" fill="url(#ig2)"/><rect x="7" y="3" width="2.2" height="2" rx="0.6" fill="#fff"/><rect x="7" y="6" width="2.2" height="6.5" fill="#fff"/></svg>
<div style="left:882px;top:339px;width:13px;height:13px;background:#fff;border:1px solid #9a9a9a;box-sizing:border-box;"></div>
<span class="t " style="top:338.69px;font-size:11px;line-height:15px;letter-spacing:-0.527px;color:#000;left:897.5px;">Admissão</span>
<div style="left:882px;top:357px;width:13px;height:13px;background:#fff;border:1px solid #9a9a9a;box-sizing:border-box;"></div>
<span class="t " style="top:356.69px;font-size:11px;line-height:15px;letter-spacing:-0.019px;color:#000;left:897.5px;">Afastamento</span>
<div style="left:882px;top:375px;width:13px;height:13px;background:#fff;border:1px solid #9a9a9a;box-sizing:border-box;"></div>
<span class="t " style="top:374.69px;font-size:11px;line-height:15px;letter-spacing:-0.344px;color:#000;left:897.5px;">Férias</span>
<div style="left:882px;top:393px;width:13px;height:13px;background:#fff;border:1px solid #9a9a9a;box-sizing:border-box;"></div>
<span class="t " style="top:392.69px;font-size:11px;line-height:15px;letter-spacing:-0.208px;color:#000;left:897.5px;">Quitação</span>
<div style="left:882px;top:411px;width:13px;height:13px;background:#f0f0f0;border:1px solid #adadad;box-sizing:border-box;"></div>
<span class="t " style="top:410.69px;font-size:11px;line-height:15px;letter-spacing:-0.060px;color:#707070;left:897.5px;">Férias/Ev. Aula</span>
<div style="left:261px;top:464px;width:765px;height:1px;background:#fff;"></div>
<div style="left:261px;top:464px;width:1px;height:106px;background:#fff;"></div>
<div style="left:1025px;top:465px;width:1px;height:106px;background:#a0a0a0;"></div>
<div style="left:1026px;top:464px;width:1px;height:107px;background:#696969;"></div>
<div style="left:262px;top:569px;width:764px;height:1px;background:#a0a0a0;"></div>
<div style="left:261px;top:570px;width:766px;height:1px;background:#696969;"></div>
<span class="t " style="top:447.69px;font-size:11px;line-height:15px;letter-spacing:-0.207px;color:#000;left:267px;">Tabela de Rubricas</span>
<span class="t " style="top:448.69px;font-size:11px;line-height:15px;letter-spacing:-0.442px;color:#000;left:372px;">eSocial</span>
<div style="left:369px;top:448px;width:41px;height:1px;background:#fff;"></div>
<div style="left:410px;top:449px;width:1px;height:15px;background:#696969;"></div>
<div style="left:259px;top:443px;width:110px;height:26px;border:3px solid #a349a4;box-sizing:border-box;"></div>
<span class="t " style="top:484.69px;font-size:11px;line-height:15px;letter-spacing:-0.395px;color:#000;left:272px;">eSocial:</span>
<div style="left:341px;top:481px;width:40px;height:21px;background:#fff;border:1px solid;border-color:#a0a0a0 #fff #fff #a0a0a0;box-sizing:border-box;"></div>
<span class="t " style="top:483.69px;font-size:11px;line-height:15px;letter-spacing:-0.075px;color:#000;left:343.75px;">9214</span>
<div style="left:385px;top:481px;width:22px;height:21px;background:#f0f0f0;border:1px solid;border-color:#fff #a0a0a0 #a0a0a0 #fff;box-sizing:border-box;"></div>
<svg class="a" style="left:391.5px;top:489px" width="9" height="5" viewBox="0 0 9 5" shape-rendering="crispEdges"><path d="M0 0h9v1h-9zM1 1h7v1h-7zM2 2h5v1h-5zM3 3h3v1h-3zM4 4h1v1h-1z" fill="#000"/></svg>
<div style="left:410px;top:481px;width:22px;height:21px;background:#f0f0f0;border:1px solid;border-color:#fff #a0a0a0 #a0a0a0 #fff;box-sizing:border-box;"></div>
<svg class="a" style="left:413px;top:483px" width="16" height="16" viewBox="0 0 16 16"><defs><radialGradient id="ig3" cx="0.4" cy="0.3" r="0.8"><stop offset="0" stop-color="#4f7be6"/><stop offset="0.6" stop-color="#1a3fc0"/><stop offset="1" stop-color="#0a2a9a"/></radialGradient></defs><circle cx="8" cy="8" r="7.5" fill="#fafafa" stroke="#808080" stroke-width="1.1"/><circle cx="8" cy="8" r="6.2" fill="url(#ig3)"/><rect x="7" y="3" width="2.2" height="2" rx="0.6" fill="#fff"/><rect x="7" y="6" width="2.2" height="6.5" fill="#fff"/></svg>
<div style="left:436px;top:481px;width:209px;height:21px;background:#f0f0f0;border:1px solid;border-color:#a0a0a0 #fff #fff #a0a0a0;box-sizing:border-box;"></div>
<span class="t " style="top:483.69px;font-size:11px;line-height:15px;letter-spacing:-0.113px;color:#000;left:440.5px;">13º salário - desconto de adiantamento</span>
<span class="t " style="top:484.69px;font-size:11px;line-height:15px;letter-spacing:-0.270px;color:#000;left:655.75px;">HomologNet:</span>
<div style="left:731px;top:481px;width:32px;height:21px;background:#fff;border:1px solid;border-color:#a0a0a0 #fff #fff #a0a0a0;box-sizing:border-box;"></div>
<div style="left:768px;top:481px;width:22px;height:21px;background:#f0f0f0;border:1px solid;border-color:#fff #a0a0a0 #a0a0a0 #fff;box-sizing:border-box;"></div>
<svg class="a" style="left:774.5px;top:489px" width="9" height="5" viewBox="0 0 9 5" shape-rendering="crispEdges"><path d="M0 0h9v1h-9zM1 1h7v1h-7zM2 2h5v1h-5zM3 3h3v1h-3zM4 4h1v1h-1z" fill="#000"/></svg>
<div style="left:794px;top:481px;width:220px;height:21px;background:#f0f0f0;border:1px solid;border-color:#a0a0a0 #fff #fff #a0a0a0;box-sizing:border-box;"></div>
<span class="t " style="top:517.69px;font-size:11px;line-height:15px;letter-spacing:-0.430px;color:#000;left:272px;">Campo TRCT:</span>
<div style="left:341px;top:514px;width:40px;height:21px;background:#fff;border:1px solid;border-color:#a0a0a0 #fff #fff #a0a0a0;box-sizing:border-box;"></div>
<span class="t " style="top:516.69px;font-size:11px;line-height:15px;letter-spacing:-0.625px;color:#000;left:344.5px;">102</span>
<div style="left:385px;top:514px;width:22px;height:21px;background:#f0f0f0;border:1px solid;border-color:#fff #a0a0a0 #a0a0a0 #fff;box-sizing:border-box;"></div>
<svg class="a" style="left:391.5px;top:522px" width="9" height="5" viewBox="0 0 9 5" shape-rendering="crispEdges"><path d="M0 0h9v1h-9zM1 1h7v1h-7zM2 2h5v1h-5zM3 3h3v1h-3zM4 4h1v1h-1z" fill="#000"/></svg>
<div style="left:410px;top:514px;width:235px;height:21px;background:#f0f0f0;border:1px solid;border-color:#a0a0a0 #fff #fff #a0a0a0;box-sizing:border-box;"></div>
<span class="t " style="top:516.69px;font-size:11px;line-height:15px;letter-spacing:-0.181px;color:#000;left:413.25px;">Adiantamento de 13° Salário</span>
<span class="t " style="top:517.69px;font-size:11px;line-height:15px;letter-spacing:-0.176px;color:#000;left:655.75px;">Início vigência:</span>
<div style="left:731px;top:514px;width:82px;height:21px;background:#fff;border:1px solid;border-color:#a0a0a0 #fff #fff #a0a0a0;box-sizing:border-box;"></div>
<span class="t " style="top:516.69px;font-size:11px;line-height:15px;letter-spacing:0.055px;color:#000;left:751.3px;">07/2010</span>
<div style="left:271px;top:546px;width:13px;height:13px;background:#f0f0f0;border:1px solid #adadad;box-sizing:border-box;"></div>
<span class="t " style="top:545.69px;font-size:11px;line-height:15px;letter-spacing:-0.264px;color:#707070;left:286.5px;">Reembolso de Despesas Pagas a Prestadores de Serviços de Saúde</span>
<svg class="a" style="left:619px;top:543px" width="16" height="16" viewBox="0 0 16 16"><defs><radialGradient id="ig4" cx="0.4" cy="0.3" r="0.8"><stop offset="0" stop-color="#4f7be6"/><stop offset="0.6" stop-color="#1a3fc0"/><stop offset="1" stop-color="#0a2a9a"/></radialGradient></defs><circle cx="8" cy="8" r="7.5" fill="#fafafa" stroke="#808080" stroke-width="1.1"/><circle cx="8" cy="8" r="6.2" fill="url(#ig4)"/><rect x="7" y="3" width="2.2" height="2" rx="0.6" fill="#fff"/><rect x="7" y="6" width="2.2" height="6.5" fill="#fff"/></svg>
<div style="left:656px;top:546px;width:13px;height:13px;background:#f0f0f0;border:1px solid #adadad;box-sizing:border-box;"></div>
<span class="t " style="top:545.69px;font-size:11px;line-height:15px;letter-spacing:-0.210px;color:#707070;left:671.5px;">Coparticipação Assistência Médica ou Odontológica</span>
<svg class="a" style="left:923px;top:543px" width="16" height="16" viewBox="0 0 16 16"><defs><radialGradient id="ig5" cx="0.4" cy="0.3" r="0.8"><stop offset="0" stop-color="#4f7be6"/><stop offset="0.6" stop-color="#1a3fc0"/><stop offset="1" stop-color="#0a2a9a"/></radialGradient></defs><circle cx="8" cy="8" r="7.5" fill="#fafafa" stroke="#808080" stroke-width="1.1"/><circle cx="8" cy="8" r="6.2" fill="url(#ig5)"/><rect x="7" y="3" width="2.2" height="2" rx="0.6" fill="#fff"/><rect x="7" y="6" width="2.2" height="6.5" fill="#fff"/></svg>
<div style="left:258px;top:576px;width:769px;height:1px;background:#ffffe1;"></div>
<div style="left:261px;top:600px;width:765px;height:1px;background:#fff;"></div>
<div style="left:261px;top:600px;width:1px;height:106px;background:#fff;"></div>
<div style="left:1025px;top:601px;width:1px;height:106px;background:#a0a0a0;"></div>
<div style="left:1026px;top:600px;width:1px;height:107px;background:#696969;"></div>
<div style="left:262px;top:705px;width:764px;height:1px;background:#a0a0a0;"></div>
<div style="left:261px;top:706px;width:766px;height:1px;background:#696969;"></div>
<div style="left:263px;top:583px;width:98px;height:1px;background:#fff;"></div>
<div style="left:263px;top:583px;width:1px;height:17px;background:#fff;"></div>
<span class="t " style="top:584.69px;font-size:11px;line-height:15px;letter-spacing:-0.234px;color:#000;left:269.25px;">Tabela de Rubricas</span>
<span class="t " style="top:583.69px;font-size:11px;line-height:15px;letter-spacing:-0.585px;color:#000;left:369.5px;">eSocial</span>
<div style="left:361px;top:578px;width:54px;height:26px;border:3px solid #a349a4;box-sizing:border-box;"></div>
<div style="left:411px;top:583px;width:1px;height:17px;background:#a0a0a0;"></div>
<span class="t " style="top:620.19px;font-size:11px;line-height:15px;letter-spacing:-0.198px;color:#000;left:272px;">Cod. Incidência IRRF:</span>
<div style="left:380px;top:614px;width:40px;height:21px;background:#fff;border:1px solid;border-color:#a0a0a0 #fff #fff #a0a0a0;box-sizing:border-box;"></div>
<span class="t " style="top:616.69px;font-size:11px;line-height:15px;letter-spacing:-0.325px;color:#000;left:387.5px;">0009</span>
<div style="left:424px;top:614px;width:22px;height:21px;background:#f0f0f0;border:1px solid;border-color:#fff #a0a0a0 #a0a0a0 #fff;box-sizing:border-box;"></div>
<svg class="a" style="left:430.5px;top:622px" width="9" height="5" viewBox="0 0 9 5" shape-rendering="crispEdges"><path d="M0 0h9v1h-9zM1 1h7v1h-7zM2 2h5v1h-5zM3 3h3v1h-3zM4 4h1v1h-1z" fill="#000"/></svg>
<div style="left:449px;top:614px;width:175px;height:21px;background:#f0f0f0;border:1px solid;border-color:#a0a0a0 #fff #fff #a0a0a0;box-sizing:border-box;"></div>
<div style="left:450px;top:615px;width:172px;height:19px;"></div>
<div style="left:450px;top:615px;width:172px;height:19px;"><span class="t" style="left:2.5px;top:2.19px;font-size:11px;line-height:15px;letter-spacing:-0.1px;">Verba transitada pela folha de pagamento</span></div>
<span class="t " style="top:620.19px;font-size:11px;line-height:15px;letter-spacing:-0.302px;color:#000;left:635px;">Cod. Incidência FGTS:</span>
<div style="left:785px;top:614px;width:27px;height:21px;background:#fff;border:1px solid;border-color:#a0a0a0 #fff #fff #a0a0a0;box-sizing:border-box;"></div>
<span class="t " style="top:616.69px;font-size:11px;line-height:15px;letter-spacing:-0.275px;color:#000;left:793px;">12</span>
<div style="left:815px;top:614px;width:22px;height:21px;background:#f0f0f0;border:1px solid;border-color:#fff #a0a0a0 #a0a0a0 #fff;box-sizing:border-box;"></div>
<svg class="a" style="left:821.5px;top:622px" width="9" height="5" viewBox="0 0 9 5" shape-rendering="crispEdges"><path d="M0 0h9v1h-9zM1 1h7v1h-7zM2 2h5v1h-5zM3 3h3v1h-3zM4 4h1v1h-1z" fill="#000"/></svg>
<div style="left:841px;top:614px;width:178px;height:21px;background:#f0f0f0;border:1px solid;border-color:#a0a0a0 #fff #fff #a0a0a0;box-sizing:border-box;"></div>
<span class="t " style="top:616.69px;font-size:11px;line-height:15px;letter-spacing:-0.340px;color:#000;left:843.75px;">Base de Cálculo do FGTS 13° Salário</span>
<div style="left:629px;top:611px;width:392px;height:27px;border:3px solid #a349a4;box-sizing:border-box;"></div>
<span class="t " style="top:650.44px;font-size:11px;line-height:15px;letter-spacing:-0.223px;color:#000;left:272px;">Cod. Incidência INSS:</span>
<div style="left:380px;top:644px;width:27px;height:21px;background:#fff;border:1px solid;border-color:#a0a0a0 #fff #fff #a0a0a0;box-sizing:border-box;"></div>
<span class="t " style="top:646.69px;font-size:11px;line-height:15px;letter-spacing:-0.275px;color:#000;left:386.5px;">00</span>
<div style="left:410px;top:644px;width:22px;height:21px;background:#f0f0f0;border:1px solid;border-color:#fff #a0a0a0 #a0a0a0 #fff;box-sizing:border-box;"></div>
<svg class="a" style="left:416.5px;top:652px" width="9" height="5" viewBox="0 0 9 5" shape-rendering="crispEdges"><path d="M0 0h9v1h-9zM1 1h7v1h-7zM2 2h5v1h-5zM3 3h3v1h-3zM4 4h1v1h-1z" fill="#000"/></svg>
<div style="left:436px;top:644px;width:188px;height:21px;background:#f0f0f0;border:1px solid;border-color:#a0a0a0 #fff #fff #a0a0a0;box-sizing:border-box;"></div>
<span class="t " style="top:646.69px;font-size:11px;line-height:15px;letter-spacing:-0.324px;color:#000;left:438.75px;">Não é Base de Cálculo</span>
<span class="t " style="top:650.44px;font-size:11px;line-height:15px;letter-spacing:-0.152px;color:#000;left:635px;">Cod. Incidência Cont. Sindical:</span>
<div style="left:785px;top:644px;width:27px;height:21px;background:#fff;border:1px solid;border-color:#a0a0a0 #fff #fff #a0a0a0;box-sizing:border-box;"></div>
<span class="t " style="top:646.69px;font-size:11px;line-height:15px;letter-spacing:-0.275px;color:#000;left:791.75px;">00</span>
<div style="left:815px;top:644px;width:22px;height:21px;background:#f0f0f0;border:1px solid;border-color:#fff #a0a0a0 #a0a0a0 #fff;box-sizing:border-box;"></div>
<svg class="a" style="left:821.5px;top:652px" width="9" height="5" viewBox="0 0 9 5" shape-rendering="crispEdges"><path d="M0 0h9v1h-9zM1 1h7v1h-7zM2 2h5v1h-5zM3 3h3v1h-3zM4 4h1v1h-1z" fill="#000"/></svg>
<div style="left:841px;top:644px;width:179px;height:21px;background:#f0f0f0;border:1px solid;border-color:#a0a0a0 #fff #fff #a0a0a0;box-sizing:border-box;"></div>
<span class="t " style="top:646.69px;font-size:11px;line-height:15px;letter-spacing:-0.324px;color:#000;left:843.75px;">Não é Base de Cálculo</span>
<div style="left:272px;top:677px;width:13px;height:13px;background:#fff;border:1px solid #9a9a9a;box-sizing:border-box;"></div>
<span class="t " style="top:676.69px;font-size:11px;line-height:15px;letter-spacing:-0.067px;color:#000;left:287.5px;">Repercute no cálculo do 13º</span>
<div style="left:441px;top:677px;width:13px;height:13px;background:#fff;border:1px solid #9a9a9a;box-sizing:border-box;"></div>
<span class="t " style="top:676.69px;font-size:11px;line-height:15px;letter-spacing:-0.143px;color:#000;left:456.5px;">Repercute no cálculo das férias</span>
<div style="left:623px;top:677px;width:13px;height:13px;background:#fff;border:1px solid #9a9a9a;box-sizing:border-box;"></div>
<span class="t " style="top:676.69px;font-size:11px;line-height:15px;letter-spacing:-0.163px;color:#000;left:638.5px;">Repercute no cálculo do Aviso Prévio</span>
<div style="left:824.25px;top:677px;width:13px;height:13px;background:#fff;border:1px solid #9a9a9a;box-sizing:border-box;"></div>
<span class="t " style="top:676.69px;font-size:11px;line-height:15px;letter-spacing:-0.075px;color:#000;left:839.75px;">Compõe o teto remuneratório</span>
<svg class="a" style="left:992px;top:675.5px" width="16" height="16" viewBox="0 0 16 16"><defs><radialGradient id="ig6" cx="0.4" cy="0.3" r="0.8"><stop offset="0" stop-color="#4f7be6"/><stop offset="0.6" stop-color="#1a3fc0"/><stop offset="1" stop-color="#0a2a9a"/></radialGradient></defs><circle cx="8" cy="8" r="7.5" fill="#fafafa" stroke="#808080" stroke-width="1.1"/><circle cx="8" cy="8" r="6.2" fill="url(#ig6)"/><rect x="7" y="3" width="2.2" height="2" rx="0.6" fill="#fff"/><rect x="7" y="6" width="2.2" height="6.5" fill="#fff"/></svg>
<div style="left:258px;top:712px;width:769px;height:94px;background:#ffffe1;"></div>
<svg class="a" style="left:261px;top:721px" width="16" height="16" viewBox="0 0 16 16"><defs><radialGradient id="ig7" cx="0.4" cy="0.3" r="0.8"><stop offset="0" stop-color="#4f7be6"/><stop offset="0.6" stop-color="#1a3fc0"/><stop offset="1" stop-color="#0a2a9a"/></radialGradient></defs><circle cx="8" cy="8" r="7.5" fill="#fafafa" stroke="#808080" stroke-width="1.1"/><circle cx="8" cy="8" r="6.2" fill="url(#ig7)"/><rect x="7" y="3" width="2.2" height="2" rx="0.6" fill="#fff"/><rect x="7" y="6" width="2.2" height="6.5" fill="#fff"/></svg>
</body></html>
